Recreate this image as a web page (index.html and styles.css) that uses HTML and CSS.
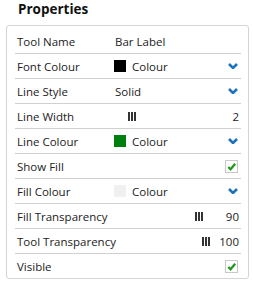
FILE: index.html
```html
<!DOCTYPE html>
<html lang="en">
<head>
    <meta charset="UTF-8">
    <title>Properties</title>
    <link rel="stylesheet" href="styles.css">
</head>
<body>
    <h2 class="title">Properties</h2>

    <div class="panel">
        <div class="row">
            <span class="label">Tool Name</span>
            <span class="value">Bar Label</span>
        </div>
        <div class="row">
            <span class="label">Font Colour</span>
            <span class="value"><i class="swatch black"></i>Colour</span>
            <svg class="chevron" viewBox="0 0 10 6"><polyline points="1,1 5,5 9,1"/></svg>
        </div>
        <div class="row">
            <span class="label">Line Style</span>
            <span class="value">Solid</span>
            <svg class="chevron" viewBox="0 0 10 6"><polyline points="1,1 5,5 9,1"/></svg>
        </div>
        <div class="row">
            <span class="label">Line Width</span>
            <div class="slider">
                <div class="rail"><span class="grip" style="left: 0%"></span></div>
            </div>
            <span class="num">2</span>
        </div>
        <div class="row">
            <span class="label">Line Colour</span>
            <span class="value"><i class="swatch green"></i>Colour</span>
            <svg class="chevron" viewBox="0 0 10 6"><polyline points="1,1 5,5 9,1"/></svg>
        </div>
        <div class="row">
            <span class="label">Show Fill</span>
            <span class="value"></span>
            <span class="check"><svg viewBox="0 0 12 12"><polyline points="2.5,6.5 5,9 10,3"/></svg></span>
        </div>
        <div class="row">
            <span class="label">Fill Colour</span>
            <span class="value"><i class="swatch light"></i>Colour</span>
            <svg class="chevron" viewBox="0 0 10 6"><polyline points="1,1 5,5 9,1"/></svg>
        </div>
        <div class="row">
            <span class="label">Fill Transparency</span>
            <div class="slider">
                <div class="rail"><span class="grip" style="left: 90%"></span></div>
            </div>
            <span class="num">90</span>
        </div>
        <div class="row">
            <span class="label">Tool Transparency</span>
            <div class="slider">
                <div class="rail"><span class="grip" style="left: 100%"></span></div>
            </div>
            <span class="num">100</span>
        </div>
        <div class="row">
            <span class="label">Visible</span>
            <span class="value"></span>
            <span class="check"><svg viewBox="0 0 12 12"><polyline points="2.5,6.5 5,9 10,3"/></svg></span>
        </div>
    </div>
</body>
</html>
```

FILE: styles.css
```css
body {
    margin: 0;
    background: #fff;
    color: #222;
    font-family: "Open Sans", "Segoe UI", sans-serif;
    font-size: 11.5px;
}

.title {
    margin: 0;
    padding: 0 0 0 18px;
    height: 25px;
    line-height: 18px;
    font-size: 13.5px;
    font-weight: bold;
    color: #111;
}

.panel {
    margin-left: 6px;
    width: 243px;
    border: 1px solid #d4d4d4;
    border-radius: 3px;
    padding: 3px 7px 0 8px;
    box-sizing: border-box;
}

.row {
    display: flex;
    align-items: center;
    height: 24px;
    padding: 0 2px;
    border-bottom: 1px solid #d0d0d0;
    white-space: nowrap;
}

.row:last-child {
    border-bottom: none;
}

.label {
    width: 98px;
    flex: none;
}

.value {
    flex: 1;
    display: flex;
    align-items: center;
}

.swatch {
    display: inline-block;
    width: 12px;
    height: 12px;
    margin: 0 6px 0 -1px;
}

.swatch.black { background: #000; }
.swatch.green { background: #007f0e; }
.swatch.light { background: #f0f0f0; }

.chevron {
    width: 10px;
    height: 6px;
    margin-right: 1px;
}

.chevron polyline {
    fill: none;
    stroke: #1e74bb;
    stroke-width: 2.6;
}

.slider {
    flex: 1;
    padding-left: 13px;
}

.rail {
    position: relative;
    width: 74px;
    height: 9px;
}

.grip {
    position: absolute;
    top: 0;
    width: 2px;
    height: 9px;
    background: #333;
    box-shadow: 3px 0 0 #333, 6px 0 0 #333;
}

.num {
    width: 30px;
    text-align: right;
}

.check {
    width: 11px;
    height: 11px;
    border: 1px solid #c8c8c8;
    background: #fff;
    margin-right: 1px;
}

.check svg {
    display: block;
    width: 11px;
    height: 11px;
}

.check polyline {
    fill: none;
    stroke: #1b9a1b;
    stroke-width: 2.4;
}
```
